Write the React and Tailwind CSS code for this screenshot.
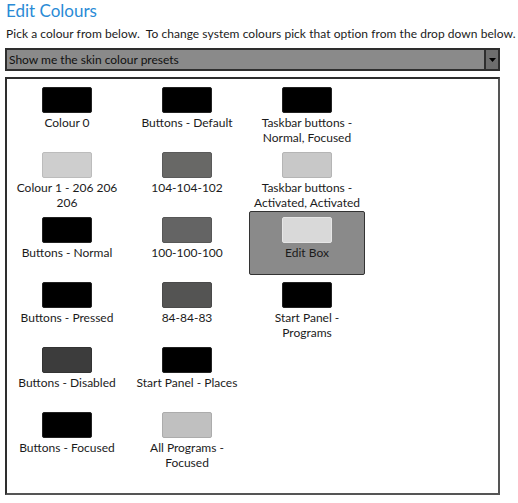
import React from 'react';

const swatches = [
  // column 1
  { label: ['Colour 0'], color: 'bg-black', border: 'border-[#222]' },
  { label: ['Colour 1 - 206 206', '206'], color: 'bg-[#cecece]', border: 'border-[#bcbcbc]' },
  { label: ['Buttons - Normal'], color: 'bg-black', border: 'border-[#222]' },
  { label: ['Buttons - Pressed'], color: 'bg-black', border: 'border-[#222]' },
  { label: ['Buttons - Disabled'], color: 'bg-[#3c3c3c]', border: 'border-[#333]' },
  { label: ['Buttons - Focused'], color: 'bg-black', border: 'border-[#222]' },
  // column 2
  { label: ['Buttons - Default'], color: 'bg-black', border: 'border-[#222]' },
  { label: ['104-104-102'], color: 'bg-[#686866]', border: 'border-[#5a5a5a]' },
  { label: ['100-100-100'], color: 'bg-[#646464]', border: 'border-[#575757]' },
  { label: ['84-84-83'], color: 'bg-[#545453]', border: 'border-[#4a4a4a]' },
  { label: ['Start Panel - Places'], color: 'bg-black', border: 'border-[#222]' },
  { label: ['All Programs -', 'Focused'], color: 'bg-[#c0c0c0]', border: 'border-[#acacac]' },
  // column 3
  { label: ['Taskbar buttons -', 'Normal, Focused'], color: 'bg-black', border: 'border-[#222]' },
  { label: ['Taskbar buttons -', 'Activated, Activated'], color: 'bg-[#c8c8c8]', border: 'border-[#b5b5b5]' },
  { label: ['Edit Box'], color: 'bg-[#d9d9d9]', border: 'border-[#e6e6e6]', selected: true },
  { label: ['Start Panel -', 'Programs'], color: 'bg-black', border: 'border-[#222]' },
];

const Swatch = ({ item }) => (
  <div className="h-[65px] w-[120px] px-[2px] pb-px">
    <div
      className={`flex h-full flex-col items-center pt-[5px] ${
        item.selected ? 'rounded-[2px] border border-[#333] bg-[#8a8a8a]' : 'border border-transparent'
      }`}
    >
      <div className={`h-[26px] w-[50px] shrink-0 rounded-[2px] border ${item.color} ${item.border}`}></div>
      <div className="mt-[2px] text-center text-[12px] leading-[15px] text-[#1b1b1b]">
        {item.label.map((line) => (
          <p key={line} className="whitespace-nowrap">{line}</p>
        ))}
      </div>
    </div>
  </div>
);

const App = () => {
  return (
    <div className="h-[503px] w-[518px] bg-white pt-px font-['Lato','Open_Sans',sans-serif]">
      <h1 className="pl-[6px] text-[17px] leading-[20px] text-[#2a8bd6]">Edit Colours</h1>

      <p className="mt-[5px] whitespace-nowrap pl-[6px] text-[12px] leading-[15px] tracking-[0.05px] text-[#1b1b1b]">
        Pick a colour from below.&nbsp; To change system colours pick that option from the drop down below.
      </p>

      {/* Dropdown */}
      <div className="ml-[5px] mt-[7px] flex h-[23px] w-[495px] items-stretch border-2 border-[#2e2e2e] bg-[#8a8a8a]">
        <span className="flex-1 pl-[2px] text-[12px] leading-[19px] text-[#111]">Show me the skin colour presets</span>
        <div className="flex w-[14px] items-center justify-center border-l-2 border-[#2e2e2e] bg-[#6e6e6e]">
          <svg width="7" height="4" viewBox="0 0 7 4">
            <path d="M0 0 L7 0 L3.5 4 Z" fill="#000" />
          </svg>
        </div>
      </div>

      {/* Colour panel */}
      <div className="ml-[5px] mt-[6px] h-[418px] w-[495px] border-2 border-[#2e2e2e] border-b-[#555] border-r-[#555] pt-[2px]">
        <div className="grid grid-flow-col grid-cols-[120px_120px_120px] grid-rows-[repeat(6,65px)]">
          {swatches.map((item) => (
            <Swatch key={item.label.join(' ')} item={item} />
          ))}
        </div>
      </div>
    </div>
  );
};

export default App;
